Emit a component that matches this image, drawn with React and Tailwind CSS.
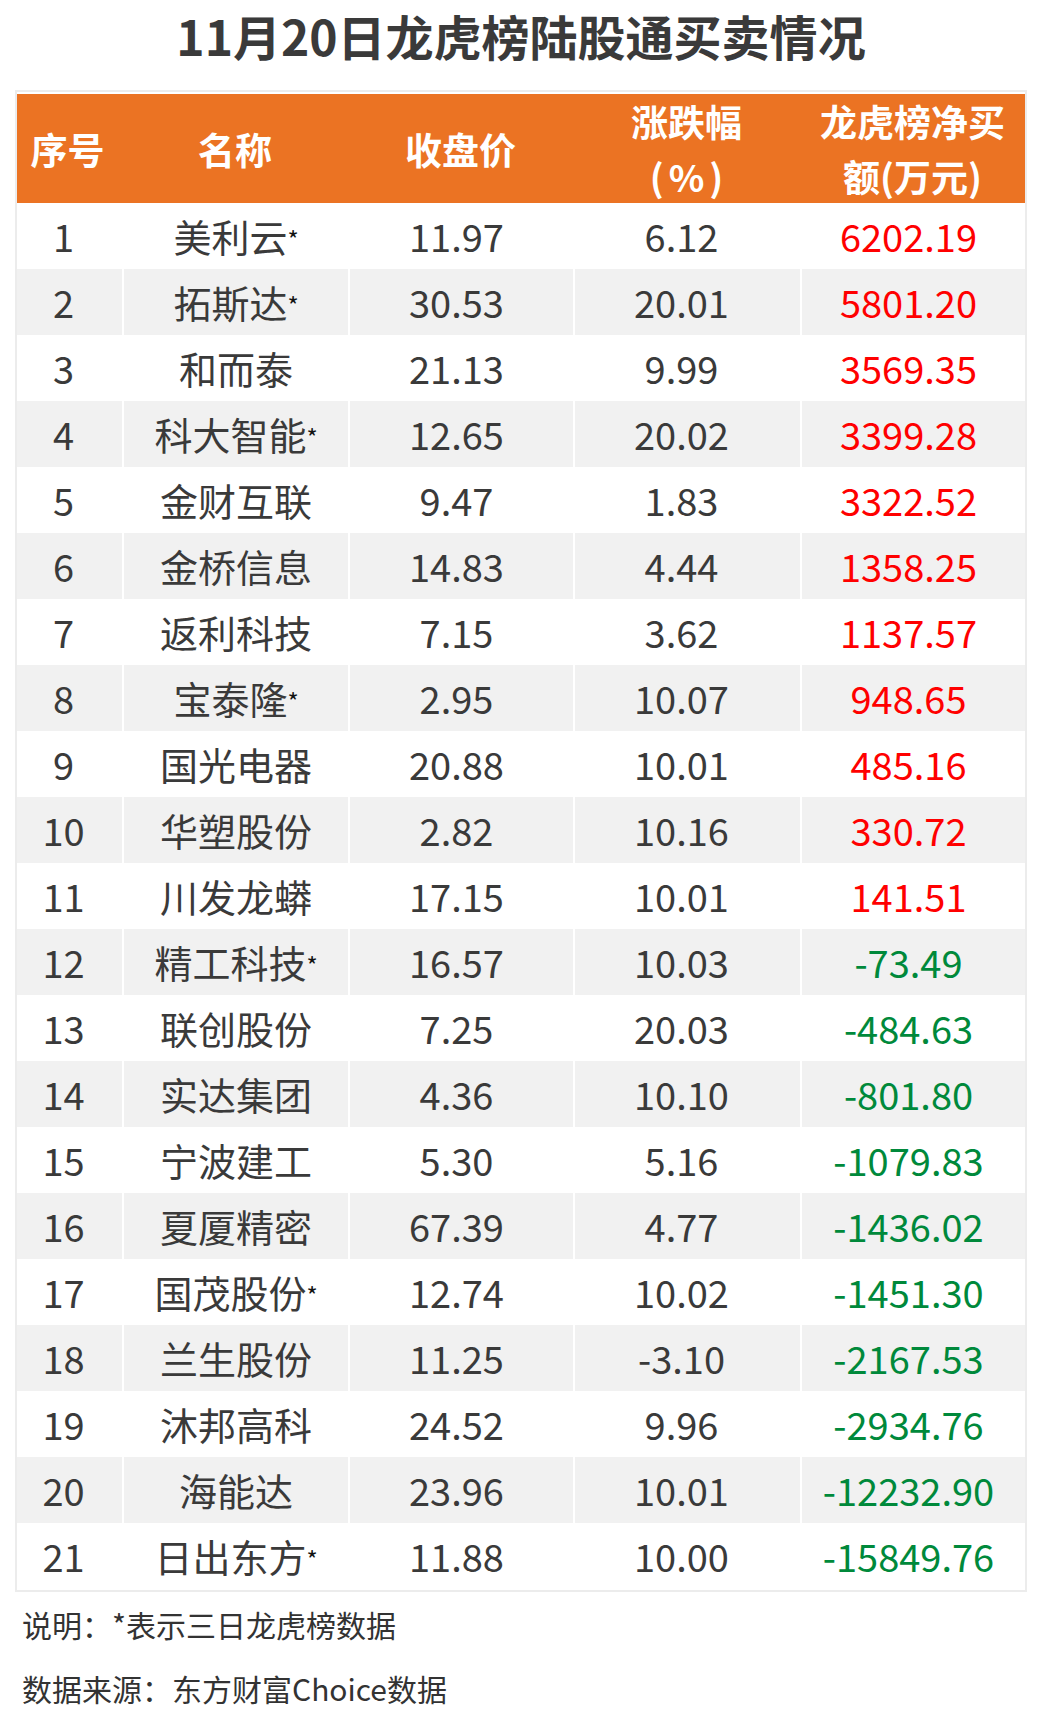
import React from 'react';

const rows = [
  ['1', '美利云', true, '11.97', '6.12', '6202.19'],
  ['2', '拓斯达', true, '30.53', '20.01', '5801.20'],
  ['3', '和而泰', false, '21.13', '9.99', '3569.35'],
  ['4', '科大智能', true, '12.65', '20.02', '3399.28'],
  ['5', '金财互联', false, '9.47', '1.83', '3322.52'],
  ['6', '金桥信息', false, '14.83', '4.44', '1358.25'],
  ['7', '返利科技', false, '7.15', '3.62', '1137.57'],
  ['8', '宝泰隆', true, '2.95', '10.07', '948.65'],
  ['9', '国光电器', false, '20.88', '10.01', '485.16'],
  ['10', '华塑股份', false, '2.82', '10.16', '330.72'],
  ['11', '川发龙蟒', false, '17.15', '10.01', '141.51'],
  ['12', '精工科技', true, '16.57', '10.03', '-73.49'],
  ['13', '联创股份', false, '7.25', '20.03', '-484.63'],
  ['14', '实达集团', false, '4.36', '10.10', '-801.80'],
  ['15', '宁波建工', false, '5.30', '5.16', '-1079.83'],
  ['16', '夏厦精密', false, '67.39', '4.77', '-1436.02'],
  ['17', '国茂股份', true, '12.74', '10.02', '-1451.30'],
  ['18', '兰生股份', false, '11.25', '-3.10', '-2167.53'],
  ['19', '沐邦高科', false, '24.52', '9.96', '-2934.76'],
  ['20', '海能达', false, '23.96', '10.01', '-12232.90'],
  ['21', '日出东方', true, '11.88', '10.00', '-15849.76'],
];

const font = { fontFamily: '"Noto Sans CJK SC", "Noto Sans", sans-serif' };

export default function App() {
  return (
    <div className="w-[1042px] h-[1720px] bg-white flex flex-col" style={font}>
      {/* Title */}
      <h1 className="h-[106px] pt-[5px] text-center text-[48px] leading-[60px] font-bold text-[#3a3a3a]">
        11月20日龙虎榜陆股通买卖情况
      </h1>

      {/* Table */}
      <div className="ml-[15px] w-[1012px] border-2 border-[#ececec] pt-[2px] pb-[1px]">
        <div className="grid grid-cols-[105px_226px_225px_227px_225px] h-[109px] bg-[#eb7323] text-white font-bold text-[37px] leading-[55px]">
          <div className="flex items-center justify-center pr-[4px]">序号</div>
          <div className="flex items-center justify-center">名称</div>
          <div className="flex items-center justify-center">收盘价</div>
          <div className="flex flex-col items-center justify-center">
            <span>涨跌幅</span>
            <span className="tracking-[5px] pl-[5px]">(%)</span>
          </div>
          <div className="flex flex-col items-center justify-center">
            <span>龙虎榜净买</span>
            <span>额(万元)</span>
          </div>
        </div>

        {rows.map(([no, name, star, close, pct, net], i) => {
          const negative = net.startsWith('-');
          return (
            <div
              key={no}
              className={`grid grid-cols-[105px_226px_225px_227px_225px] h-[66px] text-[38px] leading-none text-[#3a3a3a] ${
                i % 2 === 1 ? 'bg-[#f1f1f1]' : 'bg-white'
              }`}
            >
              <div className="flex items-center justify-center pr-[12px]">{no}</div>
              <div className="flex items-center justify-center border-l-2 border-white">
                <span>{name}</span>
                {star && (
                  <span className="text-[24px] leading-none text-[#111] relative top-[3px]">*</span>
                )}
              </div>
              <div className="flex items-center justify-center border-l-2 border-white pr-[10px]">{close}</div>
              <div className="flex items-center justify-center border-l-2 border-white pr-[12px]">{pct}</div>
              <div
                className={`flex items-center justify-center border-l-2 border-white pr-[10px] ${
                  negative ? 'text-[#00893b]' : 'text-[#ff0000]'
                }`}
              >
                {net}
              </div>
            </div>
          );
        })}
      </div>

      {/* Notes */}
      <div className="pl-[22px] pt-0 text-[30px] text-[#333333] leading-[64px]">
        <p>说明：*表示三日龙虎榜数据</p>
        <p>数据来源：东方财富Choice数据</p>
      </div>
    </div>
  );
}
